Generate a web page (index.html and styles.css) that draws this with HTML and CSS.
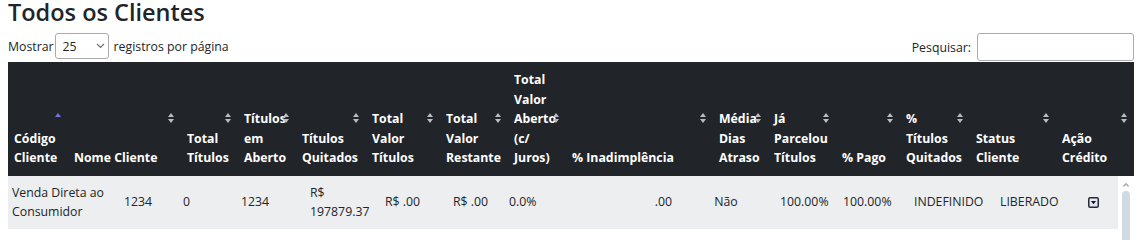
FILE: index.html
```html
<!DOCTYPE html>
<html lang="pt-BR">
<head>
<meta charset="utf-8">
<title>Todos os Clientes</title>
<link rel="stylesheet" href="styles.css">
</head>
<body>
<div class="page">
  <h1 class="title">Todos os Clientes</h1>
  <div class="controls">
    <label class="length">Mostrar
      <span class="select-wrap">
        <select class="select"><option>25</option><option>50</option><option>100</option></select>
        <svg class="chev" width="9" height="6" viewBox="0 0 9 6"><path d="M1 1l3.5 3.5L8 1" fill="none" stroke="#6c757d" stroke-width="1.2"/></svg>
      </span>
      registros por página</label>
    <label class="search">Pesquisar: <input class="search-input" type="search"></label>
  </div>
  <div class="scroll">
    <div class="scroll-head">
      <table class="grid head">
        <colgroup>
          <col style="width:60px"><col style="width:113px"><col style="width:57px"><col style="width:58px"><col style="width:70px"><col style="width:74px"><col style="width:68px"><col style="width:58px"><col style="width:147px"><col style="width:55px"><col style="width:68px"><col style="width:64px"><col style="width:70px"><col style="width:86px"><col style="width:78px">
        </colgroup>
        <thead>
          <tr>
            <th class="sort asc">Código Cliente</th>
            <th class="sort">Nome Cliente</th>
            <th class="sort">Total Títulos</th>
            <th class="sort">Títulos em Aberto</th>
            <th class="sort">Títulos Quitados</th>
            <th class="sort">Total Valor Títulos</th>
            <th class="sort">Total Valor Restante</th>
            <th class="sort">Total Valor Aberto (c/ Juros)</th>
            <th class="sort">% Inadimplência</th>
            <th class="sort">Média Dias Atraso</th>
            <th class="sort">Já Parcelou Títulos</th>
            <th class="sort">% Pago</th>
            <th class="sort tight">% Títulos Quitados</th>
            <th class="sort">Status Cliente</th>
            <th class="sort">Ação Crédito</th>
          </tr>
        </thead>
      </table>
    </div>
    <div class="scroll-wrap">
      <div class="scroll-body">
        <table class="grid body">
          <colgroup>
            <col style="width:112px"><col style="width:59px"><col style="width:58px"><col style="width:69px"><col style="width:75px"><col style="width:68px"><col style="width:56px"><col style="width:75px"><col style="width:96px"><col style="width:100px"><col style="width:63px"><col style="width:71px"><col style="width:86px"><col style="width:88px"><col style="width:34px">
          </colgroup>
          <tbody>
            <tr>
              <td>Venda Direta ao Consumidor</td><td>1234</td><td>0</td><td>1234</td><td>R$ 197879.37</td><td>R$ .00</td><td>R$ .00</td><td>0.0%</td><td class="right">.00</td><td class="center">Não</td><td>100.00%</td><td>100.00%</td><td>INDEFINIDO</td><td>LIBERADO</td>
              <td><svg class="action" width="11" height="11" viewBox="0 0 11 11"><rect x="0.75" y="0.75" width="9.5" height="9.5" rx="1.5" fill="#e4e7f3" stroke="#252a36" stroke-width="1.5"/><path d="M3 4h5L5.5 7.2z" fill="#111"/></svg></td>
            </tr>
            <tr>
              <td>Mercado Bom Preço Ltda</td><td>1301</td><td>12</td><td>9</td><td>R$ 45210.80</td><td>R$ 1520.00</td><td>R$ 980.00</td><td>2.1%</td><td class="right">.00</td><td class="center">Não</td><td>94.20%</td><td>97.90%</td><td>INDEFINIDO</td><td>LIBERADO</td>
              <td><svg class="action" width="11" height="11" viewBox="0 0 11 11"><rect x="0.75" y="0.75" width="9.5" height="9.5" rx="1.5" fill="#e4e7f3" stroke="#252a36" stroke-width="1.5"/><path d="M3 4h5L5.5 7.2z" fill="#111"/></svg></td>
            </tr>
            <tr>
              <td>Padaria Central</td><td>1322</td><td>4</td><td>4</td><td>R$ 8740.15</td><td>R$ .00</td><td>R$ .00</td><td>0.0%</td><td class="right">.00</td><td class="center">Não</td><td>100.00%</td><td>100.00%</td><td>INDEFINIDO</td><td>LIBERADO</td>
              <td><svg class="action" width="11" height="11" viewBox="0 0 11 11"><rect x="0.75" y="0.75" width="9.5" height="9.5" rx="1.5" fill="#e4e7f3" stroke="#252a36" stroke-width="1.5"/><path d="M3 4h5L5.5 7.2z" fill="#111"/></svg></td>
            </tr>
            <tr>
              <td>Distribuidora Norte</td><td>1408</td><td>7</td><td>5</td><td>R$ 23980.00</td><td>R$ 640.00</td><td>R$ 640.00</td><td>1.4%</td><td class="right">.00</td><td class="center">Sim</td><td>88.50%</td><td>92.10%</td><td>INDEFINIDO</td><td>LIBERADO</td>
              <td><svg class="action" width="11" height="11" viewBox="0 0 11 11"><rect x="0.75" y="0.75" width="9.5" height="9.5" rx="1.5" fill="#e4e7f3" stroke="#252a36" stroke-width="1.5"/><path d="M3 4h5L5.5 7.2z" fill="#111"/></svg></td>
            </tr>
            <tr>
              <td>Auto Peças Silva</td><td>1512</td><td>3</td><td>3</td><td>R$ 5120.60</td><td>R$ .00</td><td>R$ .00</td><td>0.0%</td><td class="right">.00</td><td class="center">Não</td><td>100.00%</td><td>100.00%</td><td>INDEFINIDO</td><td>LIBERADO</td>
              <td><svg class="action" width="11" height="11" viewBox="0 0 11 11"><rect x="0.75" y="0.75" width="9.5" height="9.5" rx="1.5" fill="#e4e7f3" stroke="#252a36" stroke-width="1.5"/><path d="M3 4h5L5.5 7.2z" fill="#111"/></svg></td>
            </tr>
            <tr>
              <td>Farmácia Vida</td><td>1620</td><td>9</td><td>8</td><td>R$ 31455.90</td><td>R$ 210.00</td><td>R$ 210.00</td><td>0.7%</td><td class="right">.00</td><td class="center">Não</td><td>96.30%</td><td>99.30%</td><td>INDEFINIDO</td><td>LIBERADO</td>
              <td><svg class="action" width="11" height="11" viewBox="0 0 11 11"><rect x="0.75" y="0.75" width="9.5" height="9.5" rx="1.5" fill="#e4e7f3" stroke="#252a36" stroke-width="1.5"/><path d="M3 4h5L5.5 7.2z" fill="#111"/></svg></td>
            </tr>
            <tr>
              <td>Supermercado União</td><td>1704</td><td>15</td><td>11</td><td>R$ 68320.45</td><td>R$ 2890.00</td><td>R$ 3012.40</td><td>3.2%</td><td class="right">.00</td><td class="center">Sim</td><td>90.10%</td><td>95.80%</td><td>INDEFINIDO</td><td>LIBERADO</td>
              <td><svg class="action" width="11" height="11" viewBox="0 0 11 11"><rect x="0.75" y="0.75" width="9.5" height="9.5" rx="1.5" fill="#e4e7f3" stroke="#252a36" stroke-width="1.5"/><path d="M3 4h5L5.5 7.2z" fill="#111"/></svg></td>
            </tr>
            <tr>
              <td>Loja das Tintas</td><td>1811</td><td>2</td><td>2</td><td>R$ 3260.00</td><td>R$ .00</td><td>R$ .00</td><td>0.0%</td><td class="right">.00</td><td class="center">Não</td><td>100.00%</td><td>100.00%</td><td>INDEFINIDO</td><td>LIBERADO</td>
              <td><svg class="action" width="11" height="11" viewBox="0 0 11 11"><rect x="0.75" y="0.75" width="9.5" height="9.5" rx="1.5" fill="#e4e7f3" stroke="#252a36" stroke-width="1.5"/><path d="M3 4h5L5.5 7.2z" fill="#111"/></svg></td>
            </tr>
          </tbody>
        </table>
      </div>
      <div class="vbar" aria-hidden="true">
        <svg class="vbar-arrow" width="8" height="5" viewBox="0 0 8 5"><path d="M0.5 4.5L4 0.8l3.5 3.7H5.6L4 2.8 2.4 4.5z" fill="#a5a5a5"/></svg>
        <div class="vbar-thumb"></div>
      </div>
    </div>
  </div>
</div>
</body>
</html>
```

FILE: styles.css
```css
body {
  margin: 0;
  font-family: "Open Sans", "Noto Sans", sans-serif;
  font-size: 12.3px;
  color: #212529;
  background: #fff;
}

.page {
  padding: 0 4px 0 8px;
}

.title {
  margin: 0;
  font-size: 23.5px;
  font-weight: 600;
  line-height: 24px;
}

.controls {
  display: flex;
  justify-content: space-between;
  align-items: flex-start;
  padding-top: 9px;
  height: 29px;
}

.length,
.search {
  display: flex;
  align-items: center;
  font-weight: 400;
}

.select-wrap {
  position: relative;
  display: inline-block;
  margin: 0 5px 0 1px;
  height: 26px;
}

.select {
  appearance: none;
  -webkit-appearance: none;
  box-sizing: border-box;
  width: 54px;
  height: 26px;
  padding: 0 0 0 7px;
  border: 1px solid #aaa;
  border-radius: 3px;
  background: #fff;
  color: #212529;
  font-family: inherit;
  font-size: 12.3px;
}

.chev {
  position: absolute;
  right: 4px;
  top: 10px;
  pointer-events: none;
}

.search-input {
  box-sizing: border-box;
  width: 157px;
  height: 28px;
  margin-left: 6px;
  border: 1px solid #aaa;
  border-radius: 3px;
  font-family: inherit;
  font-size: 12.3px;
}

.grid {
  width: 100%;
  border-collapse: collapse;
  table-layout: fixed;
}

.head th {
  position: relative;
  background: #212529;
  color: #fff;
  font-weight: 700;
  text-align: left;
  vertical-align: bottom;
  padding: 8px 6px;
  line-height: 19.5px;
}

.head th.tight {
  padding-right: 14px;
}

.sort::before,
.sort::after {
  content: "";
  position: absolute;
  right: 7px;
  width: 0;
  height: 0;
  border-left: 3px solid transparent;
  border-right: 3px solid transparent;
}

.sort::before {
  top: calc(50% - 6px);
  border-bottom: 4px solid #b9bcc0;
}

.sort::after {
  top: calc(50% + 0px);
  border-top: 4px solid #b9bcc0;
}

.sort.asc::before {
  border-bottom-color: #7474e0;
}

.sort.asc::after {
  border-top-color: transparent;
}

.scroll-wrap {
  position: relative;
  padding-right: 16px;
}

.scroll-body {
  height: 260px;
  overflow-y: auto;
  scrollbar-width: none;
}

.scroll-body::-webkit-scrollbar {
  display: none;
}

.vbar {
  position: absolute;
  top: 0;
  right: 0;
  bottom: 0;
  width: 16px;
  background: #fff;
  display: flex;
  flex-direction: column;
  align-items: center;
  padding-top: 6px;
  box-sizing: border-box;
}

.vbar-arrow {
  display: block;
  flex: none;
}

.vbar-thumb {
  margin-top: 4px;
  width: 8px;
  height: 110px;
  border-radius: 4px;
  background: #d1dae3;
}

.body td {
  padding: 7px 4px;
  line-height: 19.5px;
  vertical-align: middle;
  text-align: left;
}

.body tr:nth-child(odd) td {
  background: #eceef0;
}

.body td.right {
  text-align: right;
}

.body td.center {
  text-align: center;
}

.action {
  display: block;
}
```
